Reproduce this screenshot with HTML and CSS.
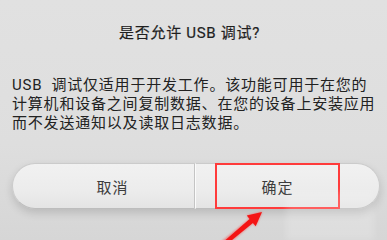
FILE: index.html
```html
<!DOCTYPE html>
<html lang="zh">
<head>
<meta charset="utf-8">
<link rel="stylesheet" href="styles.css">
</head>
<body>
<div class="dialog">
  <div class="title">是否允许 USB 调试?</div>
  <div class="message">USB 调试仅适用于开发工作。该功能可用于在您的计算机和设备之间复制数据、在您的设备上安装应用而不发送通知以及读取日志数据。</div>
  <div class="buttons">
    <div class="btn cancel">取消</div>
    <div class="btn ok">确定<span class="highlight"></span></div>
  </div>
  <div class="glare"></div>
  <svg class="arrow" width="387" height="240" viewBox="0 0 387 240">
    <defs>
      <filter id="glow" x="-20%" y="-20%" width="140%" height="140%">
        <feGaussianBlur stdDeviation="0.8"/>
      </filter>
    </defs>
    <polygon filter="url(#glow)" fill="#ff2020" opacity="0.55" points="262,212 255.7,226.3 252.9,222.9 225.8,246 221.8,241.5 249.6,219 246.8,215.6"/>
    <polygon fill="#f41414" points="262,212 255.7,226.3 252.9,222.9 225.3,245.5 222.7,242.5 249.6,219 246.8,215.6"/>
  </svg>
</div>
</body>
</html>
```
FILE: styles.css
```css
html, body {
  margin: 0;
  padding: 0;
}
body {
  width: 387px;
  height: 240px;
  overflow: hidden;
  font-family: Roboto, "Noto Sans CJK SC", sans-serif;
  color: #2a2a2a;
}
.dialog {
  position: relative;
  display: flex;
  flex-direction: column;
  height: 240px;
  background: linear-gradient(#e1e1e1 0%, #dedede 60%, #d6d6d6 100%);
}
.title {
  padding: 23px 8px 0 0;
  font-size: 15px;
  line-height: 20px;
  letter-spacing: 0.7px;
  word-spacing: 0;
  text-align: center;
  color: #1f1f1f;
  -webkit-text-stroke: 0.2px #1f1f1f;
}
.message {
  margin-top: 33px;
  padding: 0 9px 0 12px;
  font-size: 15px;
  line-height: 19px;
  letter-spacing: 0.8px;
  word-spacing: 4.5px;
  color: #222;
}
.buttons {
  display: flex;
  margin: 30px 7px 0 12px;
  height: 46px;
  border-radius: 23px;
  box-shadow: 0 4px 8px rgba(0, 0, 0, 0.14);
}
.btn {
  flex: 1;
  display: flex;
  align-items: center;
  justify-content: center;
  box-sizing: border-box;
  height: 46px;
  font-size: 15px;
  letter-spacing: 1px;
  color: #3c3c3c;
  background: linear-gradient(#f1f1f1 0%, #ececec 60%, #e4e4e4 100%);
  border: 1px solid #cbcbcb;
  border-bottom-color: #bdbdbd;
}
.cancel {
  border-radius: 23px 0 0 23px;
  border-right-color: #c4c4c4;
  padding-left: 18px;
}
.ok {
  position: relative;
  border-radius: 0 23px 23px 0;
  border-left: 1px solid #fbfbfb;
  padding-right: 20px;
}
.highlight {
  position: absolute;
  left: 19px;
  top: -1px;
  width: 125px;
  height: 46px;
  box-sizing: border-box;
  border: 2px solid #ff3b3b;
}
.glare {
  position: absolute;
  left: 286px;
  top: 192px;
  width: 88px;
  height: 48px;
  background: rgba(255, 255, 255, 0.18);
  filter: blur(3px);
}
.arrow {
  position: absolute;
  left: 0;
  top: 0;
}
```
